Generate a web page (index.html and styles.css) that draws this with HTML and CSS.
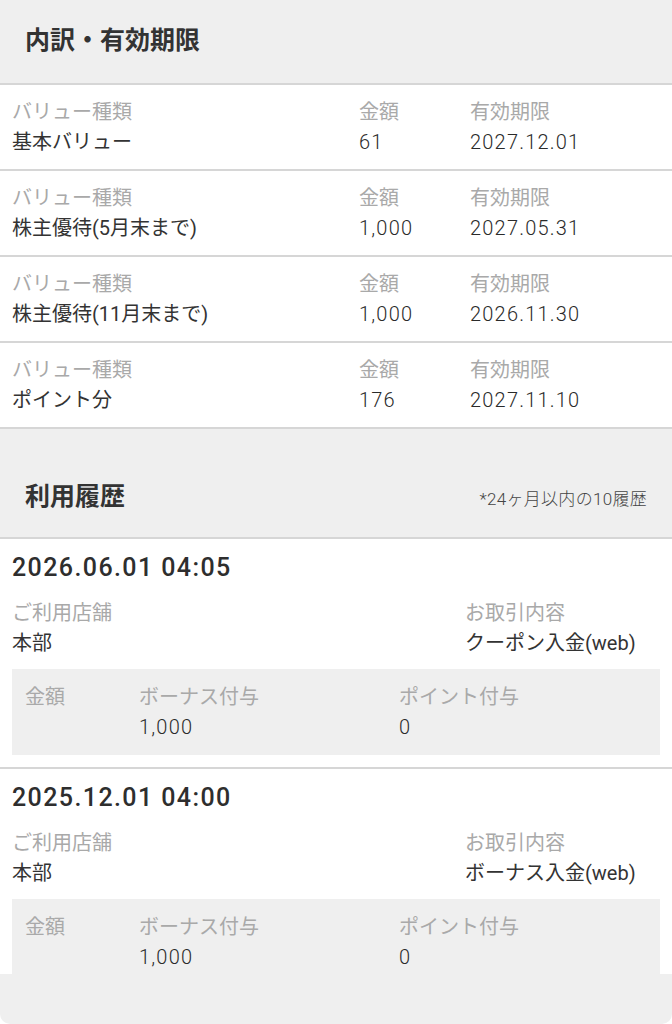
FILE: index.html
```html
<!DOCTYPE html>
<html lang="ja">
<head>
<meta charset="utf-8">
<link rel="stylesheet" href="styles.css">
</head>
<body>
<div class="page">
  <section class="sec-head sec-head--first">
    <h2 class="sec-title">内訳・有効期限</h2>
  </section>
  <div class="bal-list">
    <div class="bal-row">
      <span class="lbl">バリュー種類</span><span class="lbl">金額</span><span class="lbl">有効期限</span>
      <span class="val">基本バリュー</span><span class="val num">61</span><span class="val num">2027.12.01</span>
    </div>
    <div class="bal-row">
      <span class="lbl">バリュー種類</span><span class="lbl">金額</span><span class="lbl">有効期限</span>
      <span class="val">株主優待(5月末まで)</span><span class="val num">1,000</span><span class="val num">2027.05.31</span>
    </div>
    <div class="bal-row">
      <span class="lbl">バリュー種類</span><span class="lbl">金額</span><span class="lbl">有効期限</span>
      <span class="val">株主優待(11月末まで)</span><span class="val num">1,000</span><span class="val num">2026.11.30</span>
    </div>
    <div class="bal-row">
      <span class="lbl">バリュー種類</span><span class="lbl">金額</span><span class="lbl">有効期限</span>
      <span class="val">ポイント分</span><span class="val num">176</span><span class="val num">2027.11.10</span>
    </div>
  </div>

  <section class="sec-head sec-head--history">
    <h2 class="sec-title">利用履歴</h2>
    <span class="sec-note">*24ヶ月以内の10履歴</span>
  </section>

  <div class="hist-list">
    <article class="hist">
      <div class="hist-date">2026.06.01 04:05</div>
      <div class="hist-info">
        <span class="lbl">ご利用店舗</span><span class="lbl">お取引内容</span>
        <span class="val">本部</span><span class="val">クーポン入金(web)</span>
      </div>
      <div class="hist-box">
        <span class="lbl">金額</span><span class="lbl">ボーナス付与</span><span class="lbl">ポイント付与</span>
        <span class="val"></span><span class="val num">1,000</span><span class="val num">0</span>
      </div>
    </article>
    <article class="hist">
      <div class="hist-date">2025.12.01 04:00</div>
      <div class="hist-info">
        <span class="lbl">ご利用店舗</span><span class="lbl">お取引内容</span>
        <span class="val">本部</span><span class="val">ボーナス入金(web)</span>
      </div>
      <div class="hist-box">
        <span class="lbl">金額</span><span class="lbl">ボーナス付与</span><span class="lbl">ポイント付与</span>
        <span class="val"></span><span class="val num">1,000</span><span class="val num">0</span>
      </div>
    </article>
  </div>
</div>
<div class="footer"></div>
</body>
</html>
```

FILE: styles.css
```css
html, body {
  margin: 0;
  padding: 0;
  background: #ffffff;
}
body {
  font-family: "Roboto", "Noto Sans CJK JP", sans-serif;
  color: #333333;
  width: 672px;
  height: 1024px;
  overflow: hidden;
}
.page {
  display: flex;
  flex-direction: column;
}
.sec-head {
  background: #efefef;
  display: flex;
  justify-content: space-between;
  box-sizing: border-box;
  padding: 0 25px;
  border-bottom: 2px solid #d6d6d6;
}
.sec-head--first {
  height: 85px;
  align-items: center;
  padding-bottom: 7px;
}
.sec-head--history {
  height: 110px;
  align-items: flex-end;
  padding-bottom: 25px;
}
.sec-title {
  margin: 0;
  font-family: "Noto Sans CJK JP", sans-serif;
  font-size: 25px;
  font-weight: 700;
  line-height: 36px;
  color: #333333;
}
.sec-note {
  font-size: 17px;
  line-height: 24px;
  color: #444444;
  font-weight: 300;
  letter-spacing: 0.3px;
  padding-bottom: 1px;
}
.lbl {
  color: #a9a9a9;
  font-size: 20px;
  line-height: 30px;
  white-space: nowrap;
}
.val {
  color: #333333;
  font-size: 20px;
  line-height: 30px;
  white-space: nowrap;
}
.num {
  letter-spacing: 1.2px;
  font-weight: 300;
  color: #2a2a2a;
}
.bal-row {
  display: grid;
  grid-template-columns: 347px 111px 1fr;
  padding: 12px 12px;
  border-bottom: 2px solid #d6d6d6;
}
.hist {
  padding: 12px 12px 12px;
  border-bottom: 2px solid #d6d6d6;
  display: flex;
  flex-direction: column;
}
.hist-date {
  font-size: 25px;
  font-weight: 500;
  line-height: 34px;
  letter-spacing: 1.4px;
  color: #2e2e2e;
}
.hist-info {
  display: grid;
  grid-template-columns: 453px 1fr;
  margin-top: 13px;
}
.hist-box {
  display: grid;
  grid-template-columns: 114px 260px 1fr;
  background: #efefef;
  padding: 13px 13px;
  margin-top: 11px;
}
.footer {
  position: fixed;
  left: 0;
  right: 0;
  bottom: 0;
  height: 50px;
  background: #efefef;
  border-radius: 0 0 10px 10px;
}
```
